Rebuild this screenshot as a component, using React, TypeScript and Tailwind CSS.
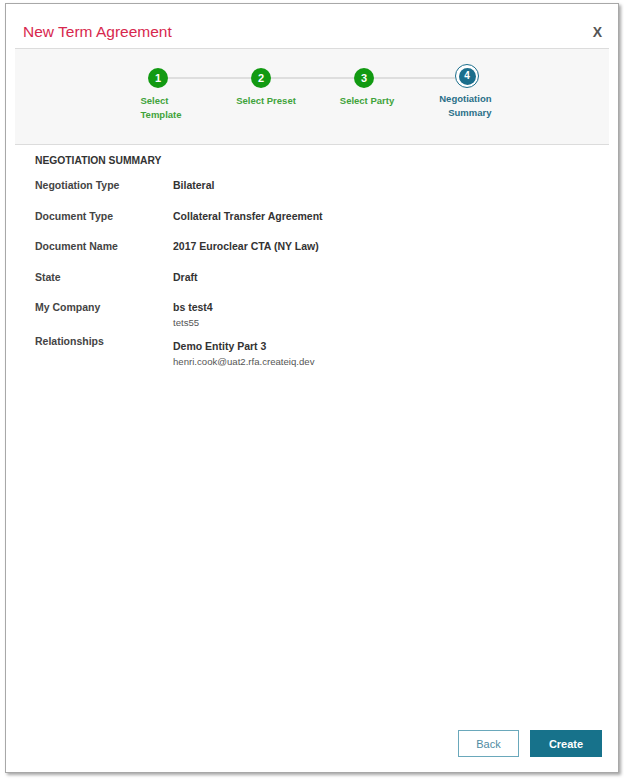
import React from 'react';

type Step = { n: number; label: string; done: boolean };

const steps: Step[] = [
  { n: 1, label: 'Select Template', done: true },
  { n: 2, label: 'Select Preset', done: true },
  { n: 3, label: 'Select Party', done: true },
  { n: 4, label: 'Negotiation Summary', done: false },
];

// per-step label placement, the original is not consistent about it
const labelClass: Record<number, string> = {
  1: 'mt-[6px] ml-[34px] w-[48px] text-left text-[#3fa33a]',
  2: 'mt-[6px] pl-[10px] text-center text-[#3fa33a]',
  3: 'mt-[6px] pl-[6px] text-center text-[#3fa33a]',
  4: 'mt-[4px] ml-[20px] w-[56px] text-right text-[#2a6f88] leading-[13px]',
};

const StepCircle: React.FC<{ step: Step }> = ({ step }) => {
  if (step.done) {
    return (
      <div className="w-5 h-5 rounded-full bg-[#129a12] flex items-center justify-center text-white text-[11px] font-bold leading-none shrink-0">
        {step.n}
      </div>
    );
  }
  return (
    <div className="w-6 h-6 rounded-full border-[1.5px] border-[#1b6e8c] bg-white flex items-center justify-center shrink-0 -mt-[4px]">
      <div className="w-[17px] h-[17px] rounded-full bg-[#1b6e8c] flex items-center justify-center text-white text-[10px] font-bold leading-none">
        {step.n}
      </div>
    </div>
  );
};

const Row: React.FC<{ label: string; value: string; sub?: string; className?: string; valueClass?: string }> = ({
  label,
  value,
  sub,
  className = 'h-[30.5px]',
  valueClass = '',
}) => (
  <div className={`flex ${className}`}>
    <div className="w-[138px] shrink-0 text-[#444]">{label}</div>
    <div className={valueClass}>
      <div className="text-[#333]">{value}</div>
      {sub && <div className="mt-[3px] text-[9.6px] font-normal leading-[12px] text-[#555]">{sub}</div>}
    </div>
  </div>
);

export default function App() {
  return (
    <div className="w-[624px] h-[780px] bg-white font-['Liberation_Sans',Arial,sans-serif] pt-[3px] pl-[5px]">
      <div className="w-[614px] h-[770px] border border-[#a8a8a8] shadow-[2px_2px_3px_rgba(0,0,0,0.35)] bg-white flex flex-col px-[9px]">
        {/* header */}
        <div className="h-[45px] pt-[12px] flex items-center justify-between border-b border-[#dcdcdc] pl-[8px] pr-[7px]">
          <h1 className="text-[15.5px] text-[#d7284e] leading-none">New Term Agreement</h1>
          <span className="text-[14px] font-bold text-[#555] leading-none">X</span>
        </div>

        {/* stepper */}
        <div className="h-[96px] bg-[#f7f7f7] border-b border-[#dcdcdc] pt-[19px]">
          <div className="flex ml-[91.5px]">
            {steps.map((s, i) => (
              <div key={s.n} className="w-[103px] flex flex-col">
                <div className="h-5 flex items-center">
                  <div className={`flex-1 h-[1.5px] ${i === 0 ? 'bg-transparent' : 'bg-[#dedede]'}`} />
                  <StepCircle step={s} />
                  <div className={`flex-1 h-[1.5px] ${i === steps.length - 1 ? 'bg-transparent' : 'bg-[#dedede]'}`} />
                </div>
                <div className={`text-[9.5px] font-bold leading-[14px] ${labelClass[s.n]}`}>{s.label}</div>
              </div>
            ))}
          </div>
        </div>

        {/* summary */}
        <div className="flex-1 flex flex-col pl-[20px] pt-[9px] text-[10.5px] font-bold leading-[14px]">
          <div className="text-[10.3px] text-[#333] uppercase">Negotiation Summary</div>
          <div className="mt-[10px]">
            <Row label="Negotiation Type" value="Bilateral" />
            <Row label="Document Type" value="Collateral Transfer Agreement" />
            <Row label="Document Name" value="2017 Euroclear CTA (NY Law)" />
            <Row label="State" value="Draft" />
            <Row label="My Company" value="bs test4" sub="tets55" className="" />
            <Row
              label="Relationships"
              value="Demo Entity Part 3"
              sub="henri.cook@uat2.rfa.createiq.dev"
              className="mt-[5px]"
              valueClass="pt-[5px]"
            />
          </div>

          <div className="mt-auto flex justify-end gap-[11px] pr-[7px] pb-[15px]">
            <button className="w-[61px] h-[27px] border border-[#6aa8bb] bg-white text-[11px] font-normal text-[#4f8ca2]">
              Back
            </button>
            <button className="w-[72px] h-[27px] bg-[#17728b] text-[11px] font-bold text-white">Create</button>
          </div>
        </div>
      </div>
    </div>
  );
}
